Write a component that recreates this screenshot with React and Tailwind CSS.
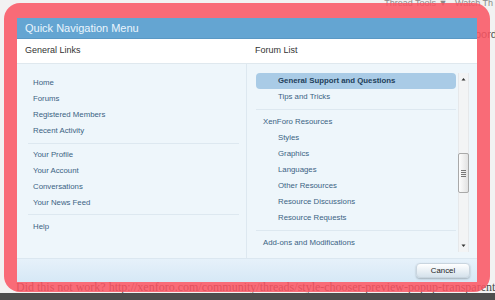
import React from "react";

const sans = { fontFamily: '"Liberation Sans", Arial, sans-serif' };

function LinkItem({ children }) {
  return (
    <div className="h-[16px] leading-[16px] pl-[16px] text-[7.8px] text-[#3b6383]">{children}</div>
  );
}

function Sep({ cls }) {
  return <div className={"h-px bg-[#dde8f0] " + cls} />;
}

function ForumRow({ children, level = 1, selected = false }) {
  return (
    <div
      className={
        "h-[16px] leading-[16px] text-[7.8px] rounded-[4px] " +
        (level === 1 ? "pl-[22px] " : "pl-[7px] ") +
        (selected ? "bg-[#a9cbe6] font-bold text-[#22405a]" : "text-[#3b6383]")
      }
    >
      {children}
    </div>
  );
}

export default function App() {
  return (
    <div className="relative w-[495px] h-[300px] overflow-hidden bg-[#f2f2f2]" style={sans}>
      {/* page underneath */}
      <div className="flex flex-col h-full">
        <div className="h-[6px] leading-[6px] text-[9px] text-[#8a8a8a] text-right pr-[2px] whitespace-nowrap overflow-hidden">
          Thread Tools ▼&nbsp;&nbsp; Watch Th
        </div>
        <div className="mt-[22px] text-right text-[11px] text-[#555] leading-[12px] -mr-[2px]">bord</div>
        <div className="flex-1" />
        <div
          className="h-[12px] leading-[12px] pl-[16px] text-[12px] text-[#4a4a4a] whitespace-nowrap overflow-hidden"
          style={{ fontFamily: '"Liberation Serif", "Times New Roman", serif' }}
        >
          Did this not work? http://xenforo.com/community/threads/style-chooser-preview-popup-transparent
        </div>
        <div className="h-[7px] bg-[#4e4e4e]" />
      </div>

      {/* modal overlay */}
      <div className="absolute left-[4px] top-[3px] w-[486px] h-[289px] rounded-[16px] bg-[rgba(250,83,98,0.85)] pl-[13px] pt-[15px] pr-[13px] pb-[10px]">
        <div className="flex flex-col h-full bg-[#eef6fb]">
          {/* title */}
          <div className="h-[21px] bg-[#64a5d2] border-b border-[#5a98c4] flex items-center pl-[8px] text-[11px] text-[#eaf5fd] leading-none">
            Quick Navigation Menu
          </div>
          {/* headers */}
          <div className="h-[25px] bg-white border-b border-[#dfe8ee] flex items-center text-[9px] text-[#333]">
            <div className="w-[230px] pl-[8px]">General Links</div>
            <div className="flex-1 pl-[8px]">Forum List</div>
          </div>
          {/* body */}
          <div className="flex-1 flex min-h-0">
            <div className="w-[230px] border-r border-[#dde8f0] pt-[11px] pr-[7px]">
              <LinkItem>Home</LinkItem>
              <LinkItem>Forums</LinkItem>
              <LinkItem>Registered Members</LinkItem>
              <LinkItem>Recent Activity</LinkItem>
              <Sep cls="ml-[11px] mt-[4px] mb-[3px]" />
              <LinkItem>Your Profile</LinkItem>
              <LinkItem>Your Account</LinkItem>
              <LinkItem>Conversations</LinkItem>
              <LinkItem>Your News Feed</LinkItem>
              <Sep cls="ml-[11px] mt-[3px] mb-[4px]" />
              <LinkItem>Help</LinkItem>
            </div>
            <div className="flex-1 flex pl-[9px] pt-[9px]">
              <div className="w-[200px]">
                <ForumRow selected>General Support and Questions</ForumRow>
                <ForumRow>Tips and Tricks</ForumRow>
                <Sep cls="mt-[4px] mb-[4px]" />
                <ForumRow level={0}>XenForo Resources</ForumRow>
                <ForumRow>Styles</ForumRow>
                <ForumRow>Graphics</ForumRow>
                <ForumRow>Languages</ForumRow>
                <ForumRow>Other Resources</ForumRow>
                <ForumRow>Resource Discussions</ForumRow>
                <ForumRow>Resource Requests</ForumRow>
                <Sep cls="mt-[4px] mb-[4px]" />
                <ForumRow level={0}>Add-ons and Modifications</ForumRow>
              </div>
              {/* scrollbar */}
              <div className="ml-[2px] w-[11px] h-[179px] bg-[#f3f4f5] border-x border-[#e6e8ea] flex flex-col items-center">
                <svg width="9" height="11" viewBox="0 0 9 11" className="mt-[1px]">
                  <path d="M2.5 6.5 L4.5 4 L6.5 6.5 Z" fill="#333" />
                </svg>
                <div className="h-[68px]" />
                <div className="w-[11px] h-[40px] rounded-[2px] border border-[#a9a9a9] bg-gradient-to-r from-[#fdfdfd] to-[#e2e2e2] flex items-center justify-center">
                  <div className="flex flex-col gap-[1px]">
                    <div className="w-[5px] h-px bg-[#777]" />
                    <div className="w-[5px] h-px bg-[#777]" />
                    <div className="w-[5px] h-px bg-[#777]" />
                    <div className="w-[5px] h-px bg-[#777]" />
                  </div>
                </div>
                <div className="flex-1" />
                <svg width="9" height="11" viewBox="0 0 9 11" className="mb-[1px]">
                  <path d="M2.5 4.5 L4.5 7 L6.5 4.5 Z" fill="#333" />
                </svg>
              </div>
            </div>
          </div>
          {/* footer */}
          <div className="h-[24px] border-t border-[#dbe7f0] bg-gradient-to-b from-[#e6f1fa] to-[#d6e8f6] flex items-center justify-end pr-[7px]">
            <div className="w-[54px] h-[15px] rounded-[4px] border border-[#c9d5df] bg-gradient-to-b from-[#ffffff] to-[#d5e2ec] shadow-[0_1px_2px_rgba(0,0,0,0.25)] flex items-center justify-center text-[7.8px] text-[#222] leading-none">
              Cancel
            </div>
          </div>
        </div>
      </div>
    </div>
  );
}
